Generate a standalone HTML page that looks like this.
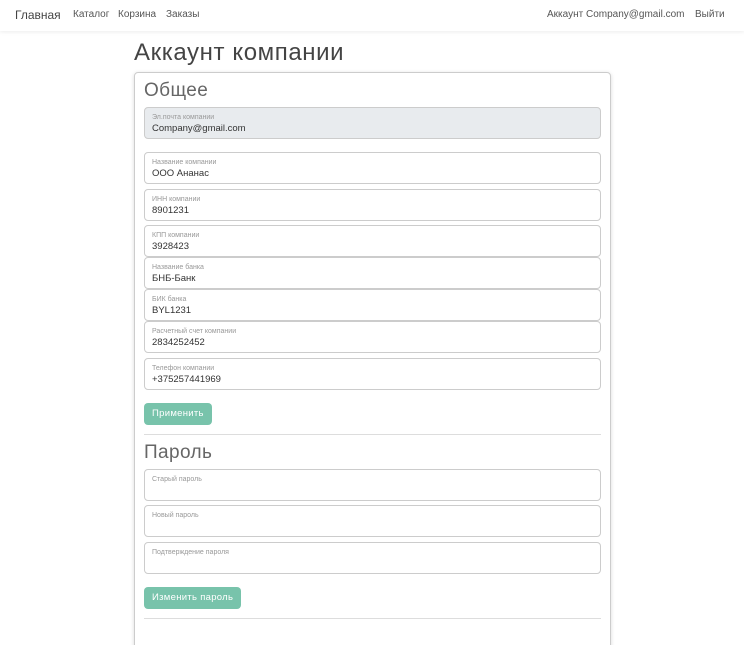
<!DOCTYPE html>
<html><head><meta charset="utf-8"><style>
*{box-sizing:border-box;margin:0;padding:0}
html,body{width:744px;height:645px;overflow:hidden}
body{background:#fff;font-family:"Liberation Sans","DejaVu Sans",sans-serif;color:#333;position:relative}
.nav{position:absolute;left:0;top:0;width:744px;height:31px;background:#fff;box-shadow:0 1px 4px rgba(0,0,0,.08)}
.nav span{position:absolute;top:9px;font-size:10px;color:#555}
h1{position:absolute;left:134px;top:39px;font-size:24px;letter-spacing:0.6px;font-weight:normal;color:#444}
.card{position:absolute;left:134px;top:72px;width:477px;height:600px;border:1px solid #ccc;border-radius:4px;box-shadow:0 1px 4px rgba(0,0,0,.15)}
h2{position:absolute;left:144px;font-size:19px;letter-spacing:0.4px;font-weight:normal;color:#666}
.f{position:absolute;left:144px;width:457px;height:32px;border:1px solid #ccc;border-radius:4px;background:#fff}
.f.g{background:#e8ebee}
.f .l{position:absolute;left:7px;top:6px;font-size:7px;color:#999}
.f .v{position:absolute;left:7px;top:15px;font-size:9.5px;color:#333}
.btn{position:absolute;left:144px;height:22px;border-radius:4px;background:#78c3ab;color:#fff;font-size:9.5px;line-height:22px;padding:0 8px;letter-spacing:0.3px}
.hr{position:absolute;left:144px;width:457px;height:1px;background:#ddd}
</style></head><body>
<div class="nav">
<span style="left:15px;top:8px;font-size:12px;color:#444">Главная</span>
<span style="left:73px">Каталог</span>
<span style="left:118px">Корзина</span>
<span style="left:166px">Заказы</span>
<span style="left:547px">Аккаунт Company@gmail.com</span>
<span style="left:695px">Выйти</span>
</div>
<h1>Аккаунт компании</h1>
<div class="card"></div>
<h2 style="top:80px">Общее</h2>
<div class="f g" style="top:107px"><div class="l">Эл.почта компании</div><div class="v">Company@gmail.com</div></div>
<div class="f" style="top:152px"><div class="l">Название компании</div><div class="v">ООО Ананас</div></div>
<div class="f" style="top:189px"><div class="l">ИНН компании</div><div class="v">8901231</div></div>
<div class="f" style="top:225px"><div class="l">КПП компании</div><div class="v">3928423</div></div>
<div class="f" style="top:257px"><div class="l">Название банка</div><div class="v">БНБ-Банк</div></div>
<div class="f" style="top:289px"><div class="l">БИК банка</div><div class="v">BYL1231</div></div>
<div class="f" style="top:321px"><div class="l">Расчетный счет компании</div><div class="v">2834252452</div></div>
<div class="f" style="top:358px"><div class="l">Телефон компании</div><div class="v">+375257441969</div></div>
<div class="btn" style="top:403px">Применить</div>
<div class="hr" style="top:434px"></div>
<h2 style="top:442px">Пароль</h2>
<div class="f" style="top:469px"><div class="l">Старый пароль</div></div>
<div class="f" style="top:505px"><div class="l">Новый пароль</div></div>
<div class="f" style="top:542px"><div class="l">Подтверждение пароля</div></div>
<div class="btn" style="top:587px">Изменить пароль</div>
<div class="hr" style="top:618px"></div>
</body></html>
